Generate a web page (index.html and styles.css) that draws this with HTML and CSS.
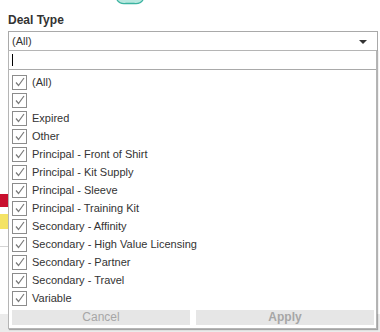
FILE: index.html
```html
<!DOCTYPE html>
<html lang="en">
<head>
    <meta charset="UTF-8">
    <meta name="viewport" content="width=device-width, initial-scale=1.0">
    <title>Deal Type Filter</title>
    <link rel="stylesheet" href="styles.css">
</head>
<body>
    <div class="logo">
        <svg width="28" height="6" viewBox="0 0 28 6">
            <path d="M1 0 Q4 4.5 10 3.5 L18 3.5 Q24 4.5 27 0 Z" fill="#b8e8df"/>
            <path d="M1 0 Q4 4.5 10 3.5 L18 3.5 Q24 4.5 27 0" fill="none" stroke="#3bb3a0" stroke-width="1.3"/>
        </svg>
    </div>

    <div class="filter">
        <div class="filter-label">Deal Type</div>
        <div class="select-box">
            <span>(All)</span>
            <span class="arrow"></span>
        </div>

        <div class="popup">
            <div class="search"><span class="caret"></span></div>
            <div class="list">
                <!-- items filled by script below -->
            </div>
            <div class="buttons">
                <button class="btn">Cancel</button>
                <button class="btn btn-apply">Apply</button>
            </div>
        </div>
    </div>

    <div class="behind">
        <div class="strip red"></div>
        <div class="strip yellow"></div>
        <div class="rule"></div>
        <div class="footer-band"></div>
    </div>

    <script>
        const items = [
            '(All)', '', 'Expired', 'Other',
            'Principal - Front of Shirt', 'Principal - Kit Supply',
            'Principal - Sleeve', 'Principal - Training Kit',
            'Secondary - Affinity', 'Secondary - High Value Licensing',
            'Secondary - Partner', 'Secondary - Travel', 'Variable'
        ];
        const list = document.querySelector('.list');
        const check = '<svg width="12" height="12" viewBox="0 0 12 12"><polyline points="2,6.5 4.5,9.5 10,2" fill="none" stroke="#7a7a7a" stroke-width="1.2"/></svg>';
        items.forEach(function(name) {
            list.insertAdjacentHTML('beforeend',
                `<div class="item"><span class="box">${check}</span><span class="item-text">${name}</span></div>`);
        });
    </script>
</body>
</html>
```

FILE: styles.css
```css
* {
    margin: 0;
    padding: 0;
    box-sizing: border-box;
}

body {
    background-color: white;
    font-family: "Liberation Sans", Arial, sans-serif;
    font-size: 11px;
    color: #333;
    overflow: hidden;
    height: 332px;
}

.logo {
    height: 12px;
    padding-left: 116px;
    line-height: 0;
}

.filter {
    position: relative;
    padding: 0 2px 0 8px;
    z-index: 2;
}

.filter-label {
    font-size: 12px;
    font-weight: bold;
    line-height: 16px;
    margin-bottom: 3px;
    color: #333;
}

.select-box {
    height: 20px;
    border: 1px solid #a9a9a9;
    display: flex;
    align-items: center;
    justify-content: space-between;
    padding: 0 10px 0 3px;
    background-color: white;
}

.arrow {
    width: 0;
    height: 0;
    border-left: 4px solid transparent;
    border-right: 4px solid transparent;
    border-top: 4px solid #333;
    margin-top: 1px;
}

.popup {
    position: absolute;
    top: 38px;
    left: 8px;
    width: 369px;
    background-color: white;
    border: 1px solid #b5b5b5;
    box-shadow: 1px 1px 1px rgba(0, 0, 0, 0.3);
}

.search {
    height: 19px;
    border-bottom: 1px solid #a9a9a9;
    padding: 3px 3px;
}

.caret {
    display: block;
    width: 1px;
    height: 12px;
    background-color: #000;
}

.list {
    padding: 3px 0 0 3px;
}

.item {
    height: 18px;
    display: flex;
    align-items: center;
}

.box {
    width: 15px;
    height: 15px;
    border: 1px solid #8c8c8c;
    display: flex;
    align-items: center;
    justify-content: center;
    margin-right: 5px;
    background-color: white;
}

.item-text {
    color: #333;
    white-space: nowrap;
}

.buttons {
    display: flex;
    gap: 6px;
    padding: 3px 2px 3px 3px;
}

.btn {
    flex: 1;
    height: 15px;
    border: none;
    background-color: #e6e6e6;
    color: #a6a6a6;
    font-family: "Liberation Sans", Arial, sans-serif;
    font-size: 12px;
    line-height: 15px;
}

.btn-apply {
    font-weight: bold;
}

.behind {
    position: relative;
    z-index: 1;
    padding-top: 143px;
}

.strip {
    width: 8px;
    height: 13px;
}

.red {
    background-color: #c8102e;
}

.yellow {
    margin-top: 7px;
    height: 15px;
    background-color: #f4e365;
}

.rule {
    width: 8px;
    margin-top: 17px;
    border-top: 1px solid #d4d4d4;
}

.footer-band {
    margin-top: 67px;
    height: 20px;
    background-color: #ebebeb;
}
```
